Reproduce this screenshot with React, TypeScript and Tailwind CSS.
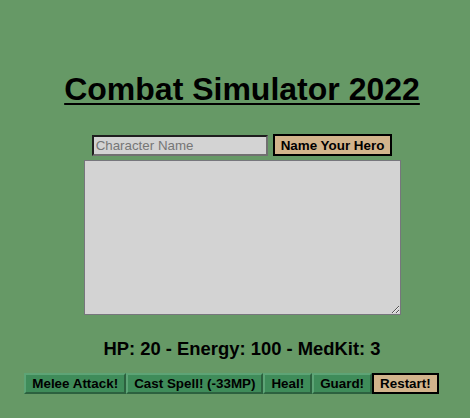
import { useState } from "react";

export default function App() {
    const [name, setName] = useState("");

    const actions = ["Melee Attack!", "Cast Spell! (-33MP)", "Heal!", "Guard!"];

    return (
        <div className="h-[418px] w-full bg-[#669966] text-black font-['Liberation_Sans',Arial,sans-serif] overflow-hidden">
            {/* Title */}
            <div className="pt-[71px] pl-[14px] flex justify-center">
                <h1 className="text-[32px] leading-[37px] font-bold underline decoration-2 underline-offset-[3px]">
                    Combat Simulator 2022
                </h1>
            </div>

            {/* Name input */}
            <div className="mt-[26px] pl-[14px] flex justify-center items-center gap-[5px]">
                <input
                    type="text"
                    placeholder="Character Name"
                    value={name}
                    onChange={(e) => setName(e.target.value)}
                    className="w-[176px] h-[21px] px-[2px] bg-[#d3d3d3] text-[13.33px] leading-[15px] border-2 border-t-[#1e1e1e] border-l-[#1e1e1e] border-b-[#707070] border-r-[#707070] placeholder:text-[#767676] outline-none"
                />
                <button className="h-[22px] px-[6px] bg-[#d2b48c] border-2 border-black text-[13.4px] leading-[15px] font-bold">
                    Name Your Hero
                </button>
            </div>

            {/* Log */}
            <div className="mt-[4px] pl-[15px] flex justify-center">
                <textarea
                    readOnly
                    className="w-[317px] h-[155px] bg-[#d3d3d3] border border-[#76767c] outline-none"
                />
            </div>

            {/* Stats */}
            <div className="mt-[23px] pl-[14px] flex justify-center">
                <h3 className="text-[18.4px] leading-[21px] font-bold">HP: 20 - Energy: 100 - MedKit: 3</h3>
            </div>

            {/* Actions */}
            <div className="mt-[14px] pr-[7px] flex justify-center">
                {actions.map((a) => (
                    <button
                        key={a}
                        className="h-[21px] px-[6px] bg-[#3f8c5a] border-2 border-t-[#5da476] border-l-[#5da476] border-b-[#2c613f] border-r-[#2c613f] text-[13.4px] leading-[15px] font-bold"
                    >
                        {a}
                    </button>
                ))}
                <button className="h-[21px] px-[6px] bg-[#d2b48c] border-2 border-black text-[13.4px] leading-[15px] font-bold">
                    Restart!
                </button>
            </div>
        </div>
    );
}
